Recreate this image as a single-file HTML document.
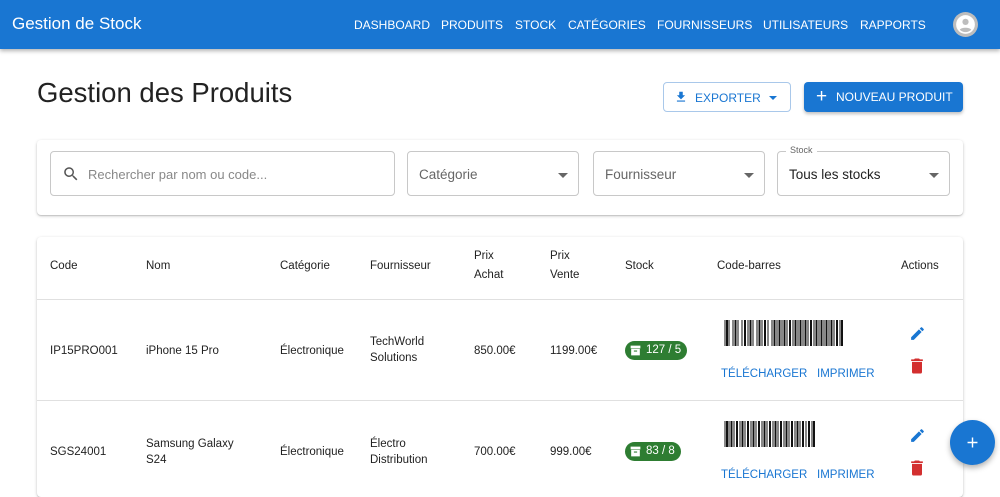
<!DOCTYPE html>
<html><head><meta charset="utf-8"><style>
*{box-sizing:border-box;margin:0;padding:0}
body{width:1000px;height:477px;overflow:hidden;background:#fff;font-family:"Liberation Sans",Arial,sans-serif;position:relative;color:#222}
.a{position:absolute}
.bar{left:0;top:0;width:1000px;height:49px;background:#1976d2;box-shadow:0 2px 4px rgba(0,0,0,.3);z-index:2}
.nav{font-size:12px;color:#fff;top:18px}
.card{background:#fff;border-radius:4px;box-shadow:0 1px 3px rgba(0,0,0,.2),0 1px 1px rgba(0,0,0,.12)}
.field{border:1px solid #c8c8c8;border-radius:4px;height:45px;top:151px;font-size:13.5px;color:#666}
.field span{position:absolute;left:11px;top:15px}
.arr{position:absolute;right:10px;top:21px;width:0;height:0;border-left:5px solid transparent;border-right:5px solid transparent;border-top:5px solid #666}
.t{font-size:11.5px;color:#222;line-height:16px}
.hd{font-size:11.5px;color:#222;line-height:19px}
.line{height:1px;background:#e0e0e0;left:37px;width:926px}
.chip{background:#2e7d32;color:#fff;border-radius:10px;height:19px;font-size:11.5px;line-height:19px;padding-left:21px;padding-right:6px}
.lnk{color:#1976d2;font-size:11.5px}
</style></head><body>
<div class="a bar">
<div class="a" style="left:12px;top:14px;color:#fff;font-size:17px">Gestion de Stock</div>
<div class="a nav" style="left:354px">DASHBOARD</div>
<div class="a nav" style="left:441px">PRODUITS</div>
<div class="a nav" style="left:515px">STOCK</div>
<div class="a nav" style="left:568px">CATÉGORIES</div>
<div class="a nav" style="left:657px">FOURNISSEURS</div>
<div class="a nav" style="left:763px">UTILISATEURS</div>
<div class="a nav" style="left:860px">RAPPORTS</div>
<svg class="a" style="left:953px;top:12px" width="25" height="25" viewBox="0 0 24 24"><circle cx="12" cy="12" r="12" fill="#bdbdbd"/><circle cx="12" cy="12" r="9" fill="#fff"/><circle cx="12" cy="9.5" r="3" fill="#bdbdbd"/><path d="M6.5 17c1.5-2.5 9.5-2.5 11 0c-1.5 1.5-3.5 2.3-5.5 2.3s-4-.8-5.5-2.3z" fill="#bdbdbd"/></svg>
</div>

<div class="a" style="left:37px;top:77px;font-size:27.5px;color:#222">Gestion des Produits</div>
<div class="a" style="left:663px;top:82px;width:128px;height:30px;border:1px solid #a9c8ea;border-radius:4px;color:#1976d2;font-size:12px">
<svg class="a" style="left:10px;top:7px" width="14" height="14" viewBox="0 0 24 24"><path fill="#1976d2" d="M19 9h-4V3H9v6H5l7 7 7-7zM5 18v2h14v-2H5z"/></svg>
<span class="a" style="left:31px;top:8px">EXPORTER</span>
<div class="a" style="left:105px;top:13px;border-left:4px solid transparent;border-right:4px solid transparent;border-top:4px solid #1976d2"></div>
</div>
<div class="a" style="left:804px;top:82px;width:159px;height:30px;background:#1976d2;border-radius:4px;color:#fff;font-size:12px;box-shadow:0 2px 3px rgba(0,0,0,.25)">
<span class="a" style="left:12px;top:4px;font-size:19px">+</span>
<span class="a" style="left:32px;top:8px">NOUVEAU PRODUIT</span>
</div>

<div class="a card" style="left:37px;top:140px;width:926px;height:75px"></div>
<div class="a field" style="left:50px;width:345px">
<svg class="a" style="left:11px;top:13px" width="18" height="18" viewBox="0 0 24 24"><path fill="#555" d="M15.5 14h-.8l-.3-.3A6.5 6.5 0 1 0 9.5 16a6.5 6.5 0 0 0 4.2-1.6l.3.3v.8l5 5 1.5-1.5-5-5zm-6 0C7 14 5 12 5 9.5S7 5 9.5 5 14 7 14 9.5 12 14 9.5 14z"/></svg>
<span style="left:37px;color:#888;font-size:13px;top:15px">Rechercher par nom ou code...</span></div>
<div class="a field" style="left:407px;width:172px"><span>Catégorie</span><i class="arr"></i></div>
<div class="a field" style="left:593px;width:172px"><span>Fournisseur</span><i class="arr"></i></div>
<div class="a field" style="left:777px;width:173px"><span style="color:#222">Tous les stocks</span><i class="arr"></i>
<div class="a" style="left:8px;top:-7px;background:#fff;padding:0 4px;font-size:9px;color:#666">Stock</div></div>

<div class="a card" style="left:37px;top:237px;width:926px;height:260px"></div>
<div class="a hd" style="left:50px;top:257px">Code</div>
<div class="a hd" style="left:146px;top:257px">Nom</div>
<div class="a hd" style="left:280px;top:257px">Catégorie</div>
<div class="a hd" style="left:370px;top:257px">Fournisseur</div>
<div class="a hd" style="left:474px;top:247px">Prix<br>Achat</div>
<div class="a hd" style="left:550px;top:247px">Prix<br>Vente</div>
<div class="a hd" style="left:625px;top:257px">Stock</div>
<div class="a hd" style="left:717px;top:257px">Code-barres</div>
<div class="a hd" style="left:901px;top:257px">Actions</div>
<div class="a line" style="top:299px"></div>
<div class="a line" style="top:400px"></div>

<div class="a t" style="left:50px;top:343px">IP15PRO001</div>
<div class="a t" style="left:146px;top:343px">iPhone 15 Pro</div>
<div class="a t" style="left:280px;top:343px">Électronique</div>
<div class="a t" style="left:370px;top:334px">TechWorld<br>Solutions</div>
<div class="a t" style="left:474px;top:343px">850.00€</div>
<div class="a t" style="left:550px;top:343px">1199.00€</div>
<div class="a chip" style="left:625px;top:341px">127 / 5</div>
<svg class="a" style="left:629px;top:344px" width="13" height="13" viewBox="0 0 24 24"><path fill="#fff" d="M3 3h18v5H3zM4 9h16v12H4z"/><rect x="9" y="12" width="6" height="2" fill="#2e7d32"/></svg>
<svg class="a" style="left:724px;top:320px" width="120" height="26"><path stroke="#111" stroke-width="1" d="M1 0v26M5 0v26M9 0v26M14 0v26M18 0v26M24 0v26M29 0v26M33 0v26M38 0v26M44 0v26M48 0v26M53 0v26M58 0v26M63 0v26M69 0v26M74 0v26M79 0v26M84 0v26M90 0v26M95 0v26M100 0v26M105 0v26M110 0v26M116 0v26"/><path stroke="#111" stroke-width="2" d="M3 0v26M11.5 0v26M21 0v26M26.5 0v26M35.5 0v26M41 0v26M50.5 0v26M55.5 0v26M60.5 0v26M66 0v26M71.5 0v26M76.5 0v26M81.5 0v26M87 0v26M92.5 0v26M97.5 0v26M102.5 0v26M107.5 0v26M113 0v26M118 0v26"/></svg>
<div class="a lnk" style="left:721px;top:368px">TÉLÉCHARGER</div>
<div class="a lnk" style="left:817px;top:368px">IMPRIMER</div>
<svg class="a" style="left:909px;top:325px" width="17" height="17" viewBox="0 0 24 24"><path fill="#1976d2" d="M3 17.25V21h3.75L17.8 9.94l-3.75-3.75L3 17.25zM20.7 7.04a1 1 0 0 0 0-1.41l-2.34-2.34a1 1 0 0 0-1.41 0l-1.83 1.83 3.75 3.75 1.83-1.83z"/></svg>
<svg class="a" style="left:907px;top:356px" width="20" height="20" viewBox="0 0 24 24"><path fill="#d32f2f" d="M6 19a2 2 0 0 0 2 2h8a2 2 0 0 0 2-2V7H6v12zM19 4h-3.5l-1-1h-5l-1 1H5v2h14V4z"/></svg>

<div class="a t" style="left:50px;top:444px">SGS24001</div>
<div class="a t" style="left:146px;top:436px">Samsung Galaxy<br>S24</div>
<div class="a t" style="left:280px;top:444px">Électronique</div>
<div class="a t" style="left:370px;top:436px">Électro<br>Distribution</div>
<div class="a t" style="left:474px;top:444px">700.00€</div>
<div class="a t" style="left:550px;top:444px">999.00€</div>
<div class="a chip" style="left:625px;top:442px">83 / 8</div>
<svg class="a" style="left:629px;top:445px" width="13" height="13" viewBox="0 0 24 24"><path fill="#fff" d="M3 3h18v5H3zM4 9h16v12H4z"/><rect x="9" y="12" width="6" height="2" fill="#2e7d32"/></svg>
<svg class="a" style="left:724px;top:421px" width="92" height="26"><path stroke="#111" stroke-width="1" d="M1 0v26M5 0v26M10 0v26M16 0v26M21 0v26M27 0v26M32 0v26M38 0v26M43 0v26M49 0v26M54 0v26M60 0v26M65 0v26M71 0v26M76 0v26M82 0v26M88 0v26"/><path stroke="#111" stroke-width="2" d="M3 0v26M7.5 0v26M13 0v26M18.5 0v26M24 0v26M29.5 0v26M35 0v26M40.5 0v26M46 0v26M51.5 0v26M57 0v26M62.5 0v26M68 0v26M73.5 0v26M79 0v26M85 0v26M90 0v26"/></svg>
<div class="a lnk" style="left:721px;top:469px">TÉLÉCHARGER</div>
<div class="a lnk" style="left:817px;top:469px">IMPRIMER</div>
<svg class="a" style="left:909px;top:427px" width="17" height="17" viewBox="0 0 24 24"><path fill="#1976d2" d="M3 17.25V21h3.75L17.8 9.94l-3.75-3.75L3 17.25zM20.7 7.04a1 1 0 0 0 0-1.41l-2.34-2.34a1 1 0 0 0-1.41 0l-1.83 1.83 3.75 3.75 1.83-1.83z"/></svg>
<svg class="a" style="left:907px;top:458px" width="20" height="20" viewBox="0 0 24 24"><path fill="#d32f2f" d="M6 19a2 2 0 0 0 2 2h8a2 2 0 0 0 2-2V7H6v12zM19 4h-3.5l-1-1h-5l-1 1H5v2h14V4z"/></svg>

<div class="a" style="left:950px;top:420px;width:45px;height:45px;border-radius:50%;background:#1976d2;box-shadow:0 3px 6px rgba(0,0,0,.3)">
<svg class="a" style="left:14px;top:14px" width="17" height="17" viewBox="0 0 24 24"><path fill="#fff" d="M19 13h-6v6h-2v-6H5v-2h6V5h2v6h6v2z"/></svg></div>
</body></html>
